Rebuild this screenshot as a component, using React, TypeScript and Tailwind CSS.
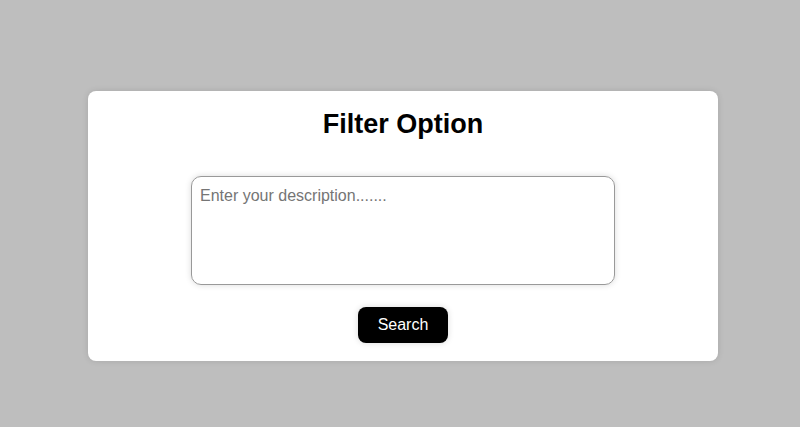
import React from "react";

export default function App() {
  return (
    <div className="min-h-screen w-full bg-[#bebebe] pt-[91px] pl-[88px] font-['Liberation_Sans',Arial,sans-serif]">
      <div className="flex w-[630px] flex-col items-center rounded-lg bg-white pt-[18px] pb-[18px] shadow-[0_0_6px_rgba(0,0,0,0.12)]">
        {/* Title */}
        <h2 className="text-[27px] font-bold leading-[30px] text-black">
          Filter Option
        </h2>

        {/* Description */}
        <textarea
          placeholder="Enter your description......."
          className="mt-[37px] h-[109px] w-[424px] resize-none rounded-[10px] border border-[#999999] p-2 text-base leading-[22px] text-black shadow-[0_0_6px_rgba(0,0,0,0.15)] outline-none placeholder:text-[#757575]"
        />

        {/* Search Button */}
        <button className="mt-[22px] h-9 rounded-lg bg-black px-5 text-base text-white shadow-[0_0_6px_rgba(0,0,0,0.15)]">
          Search
        </button>
      </div>
    </div>
  );
}
